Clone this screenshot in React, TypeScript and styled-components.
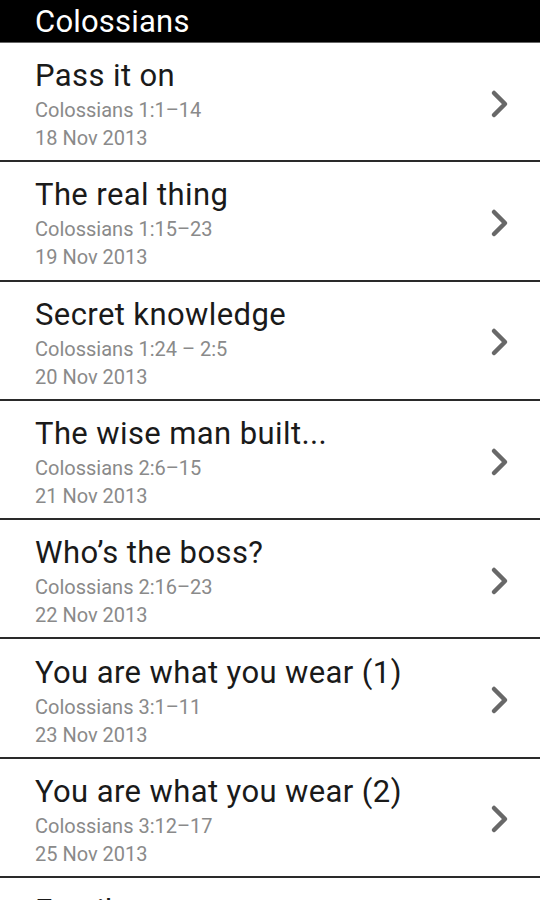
import React from 'react';
import styled, { createGlobalStyle } from 'styled-components';

const studies = [
  { title: 'Pass it on', passage: 'Colossians 1:1\u201314', date: '18 Nov 2013' },
  { title: 'The real thing', passage: 'Colossians 1:15\u201323', date: '19 Nov 2013' },
  { title: 'Secret knowledge', passage: 'Colossians 1:24 \u2013 2:5', date: '20 Nov 2013' },
  { title: 'The wise man built...', passage: 'Colossians 2:6\u201315', date: '21 Nov 2013' },
  { title: 'Who\u2019s the boss?', passage: 'Colossians 2:16\u201323', date: '22 Nov 2013' },
  { title: 'You are what you wear (1)', passage: 'Colossians 3:1\u201311', date: '23 Nov 2013' },
  { title: 'You are what you wear (2)', passage: 'Colossians 3:12\u201317', date: '25 Nov 2013' },
  { title: 'Family matters', passage: 'Colossians 3:18 \u2013 4:1', date: '26 Nov 2013' },
];

const GlobalStyle = createGlobalStyle`
  html, body {
    margin: 0;
    padding: 0;
    background: #ffffff;
    font-family: Roboto, "Liberation Sans", sans-serif;
    overflow: hidden;
  }
`;

const Screen = styled.div`
  width: 540px;
  height: 900px;
  overflow: hidden;
  background: #fff;
`;

const TitleBar = styled.div`
  height: 43px;
  background: #000;
  color: #fff;
  display: flex;
  align-items: center;
  padding: 1px 0 0 35px;
  font-size: 31px;
  letter-spacing: 0.2px;
  box-sizing: border-box;
  border-bottom: 1px solid #666;
`;

const List = styled.div`
  display: flex;
  flex-direction: column;
`;

const Row = styled.div`
  height: 119.3px;
  flex-shrink: 0;
  box-sizing: border-box;
  display: flex;
  align-items: center;
  padding: 0 30px 0 35px;
  border-bottom: 2px solid #2a2a2a;
`;

const Texts = styled.div`
  flex: 1;
  display: flex;
  flex-direction: column;
  margin-top: 5px;
`;

const Title = styled.div`
  font-size: 31px;
  letter-spacing: 0.4px;
  color: #1a1a1a;
  line-height: 40px;
`;

const Sub = styled.div`
  font-size: 20px;
  color: #8a8a8a;
  line-height: 28px;
`;

const Chevron = () => (
  <svg width="20" height="30" viewBox="0 0 20 30" style={{ marginTop: 4 }}>
    <path d="M4 4 L15 15 L4 26" fill="none" stroke="#686868" strokeWidth="4.5" strokeLinecap="round" strokeLinejoin="round" />
  </svg>
);

export default function App() {
  return (
    <Screen>
      <GlobalStyle />
      <TitleBar>Colossians</TitleBar>
      <List>
        {studies.map((s) => (
          <Row key={s.title}>
            <Texts>
              <Title>{s.title}</Title>
              <Sub>{s.passage}</Sub>
              <Sub>{s.date}</Sub>
            </Texts>
            <Chevron />
          </Row>
        ))}
      </List>
    </Screen>
  );
}
